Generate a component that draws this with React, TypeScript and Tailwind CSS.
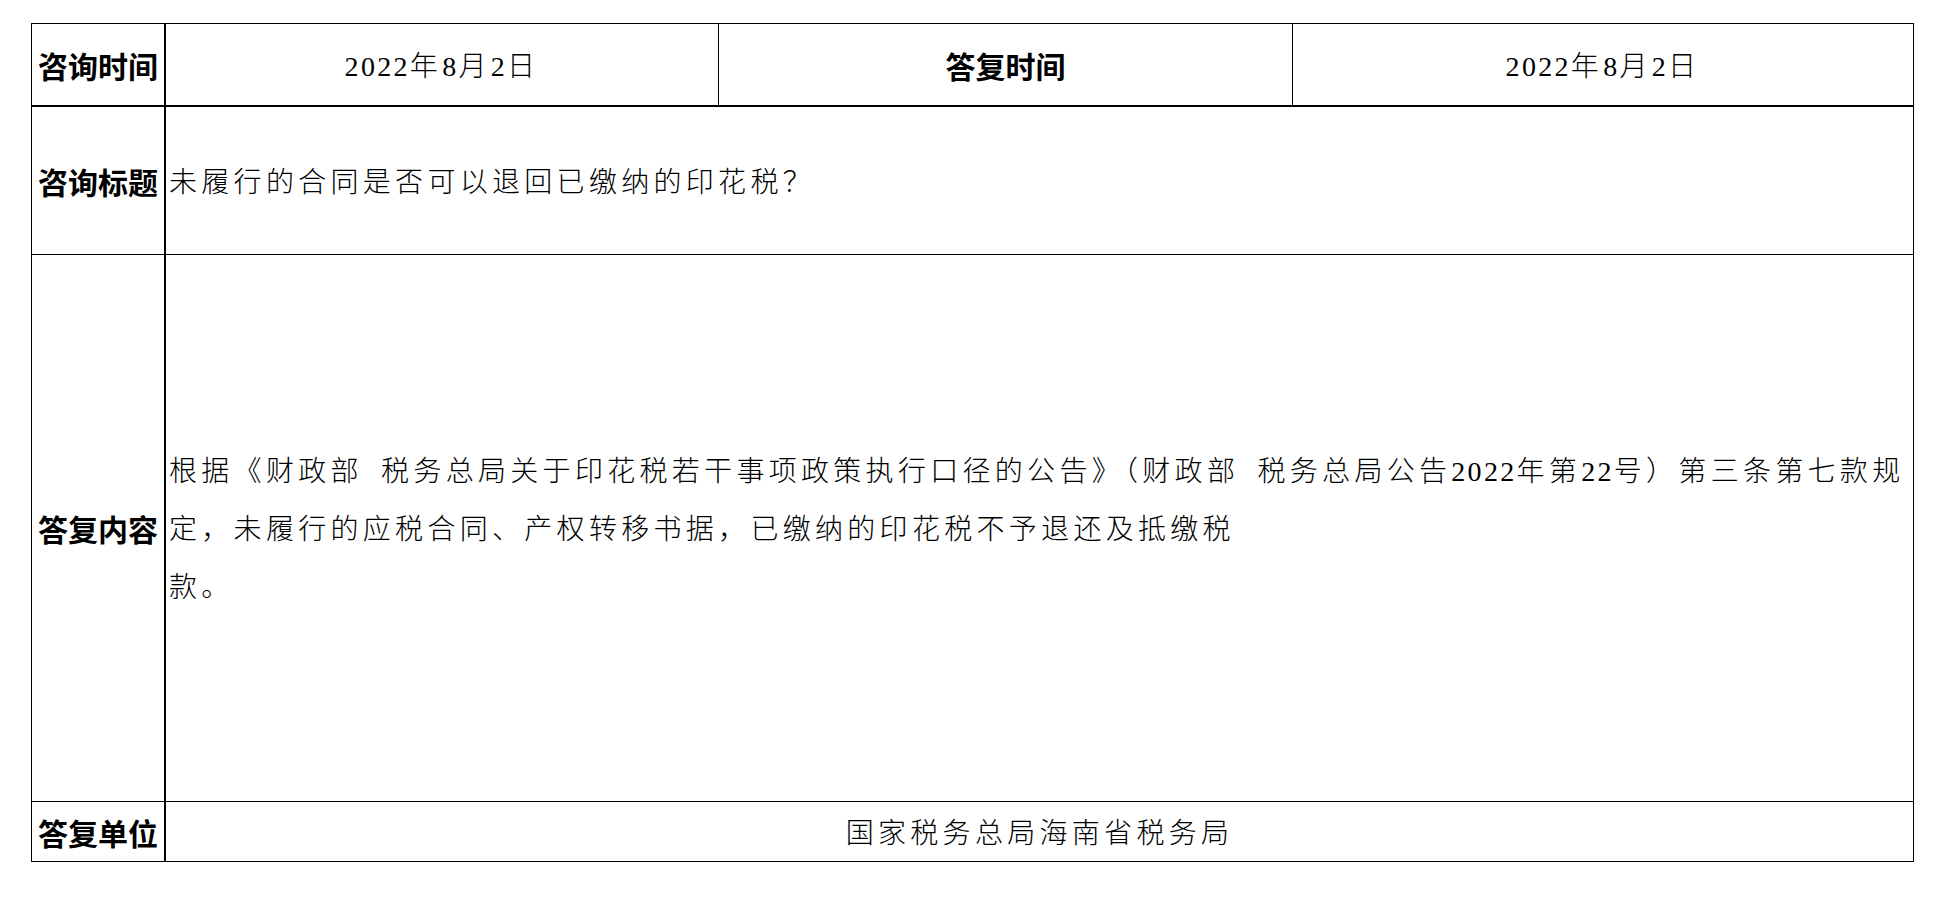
import type { ReactNode } from 'react';

// digits are set a bit tighter than the CJK characters, like the original document
function withDigits(text: string) {
  return text.split(/(\d+)/).map((part, i) =>
    /^\d+$/.test(part) ? (
      <span key={i} className="font-[family-name:'Liberation_Serif',serif] tracking-[2.3px]">
        {part}
      </span>
    ) : (
      part
    )
  );
}

function Label({ children, wide }: { children: ReactNode; wide?: boolean }) {
  return (
    <div
      className={`${
        wide ? 'w-[574px] border-r' : 'w-[134px] border-r-2'
      } shrink-0 border-black flex items-center justify-center font-[family-name:'Noto_Sans_CJK_SC',sans-serif] text-[30px] font-bold leading-none`}
    >
      {children}
    </div>
  );
}

function Body({ children }: { children: string }) {
  return (
    <span className="font-[family-name:'Liberation_Serif','Noto_Sans_CJK_SC',serif] text-[28px] font-light tracking-[4.3px] whitespace-nowrap">
      {withDigits(children)}
    </span>
  );
}

export default function App() {
  const lines = [
    '根据《财政部\u2002税务总局关于印花税若干事项政策执行口径的公告》（财政部\u2002税务总局公告2022年第22号）第三条第七款规',
    '定，未履行的应税合同、产权转移书据，已缴纳的印花税不予退还及抵缴税',
    '款。',
  ];

  return (
    <div className="min-h-screen bg-white pt-[23px] pl-[31px] text-black">
      <div className="w-[1883px] border border-black">
        {/* 咨询时间 / 答复时间 */}
        <div className="flex h-[83px] border-b-2 border-black">
          <Label>咨询时间</Label>
          <div className="w-[553px] shrink-0 border-r border-black flex items-center justify-center pt-[5px]">
            <Body>2022年8月2日</Body>
          </div>
          <Label wide>答复时间</Label>
          <div className="flex-1 flex items-center justify-center pt-[5px]">
            <Body>2022年8月2日</Body>
          </div>
        </div>

        {/* 咨询标题 */}
        <div className="flex h-[148px] border-b border-black">
          <Label>咨询标题</Label>
          <div className="flex-1 flex items-center pl-[3px] pt-[5px]">
            <Body>未履行的合同是否可以退回已缴纳的印花税？</Body>
          </div>
        </div>

        {/* 答复内容 */}
        <div className="flex h-[547px] border-b border-black">
          <Label>答复内容</Label>
          <div className="flex-1 flex items-center pl-[3px]">
            <div className="flex flex-col leading-[58px] pt-[4px]">
              {lines.map((line, i) => (
                <Body key={i}>{line}</Body>
              ))}
            </div>
          </div>
        </div>

        {/* 答复单位 */}
        <div className="flex h-[59px]">
          <Label>答复单位</Label>
          <div className="flex-1 flex items-center justify-center pt-[5px]">
            <Body>国家税务总局海南省税务局</Body>
          </div>
        </div>
      </div>
    </div>
  );
}
